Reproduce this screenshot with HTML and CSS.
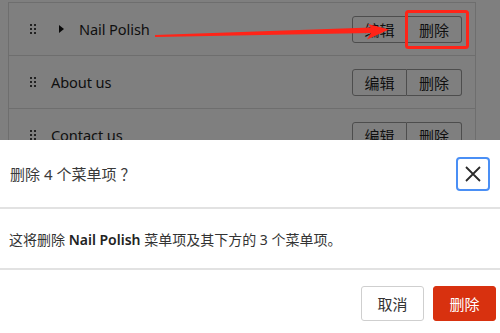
FILE: index.html
```html
<!DOCTYPE html>
<html lang="zh-CN">
<head>
<meta charset="utf-8">
<title>删除菜单项</title>
<link rel="stylesheet" href="styles.css">
</head>
<body>
  <div class="page">
    <ul class="menu-list">
      <li class="row">
        <span class="handle"><i></i><i></i><i></i><i></i><i></i><i></i></span>
        <span class="toggle"><span class="tri"></span></span>
        <span class="label">Nail Polish</span>
        <span class="actions"><button class="btn">编辑</button><button class="btn">删除</button></span>
      </li>
      <li class="row">
        <span class="handle"><i></i><i></i><i></i><i></i><i></i><i></i></span>
        <span class="label">About us</span>
        <span class="actions"><button class="btn">编辑</button><button class="btn">删除</button></span>
      </li>
      <li class="row">
        <span class="handle"><i></i><i></i><i></i><i></i><i></i><i></i></span>
        <span class="label">Contact us</span>
        <span class="actions"><button class="btn">编辑</button><button class="btn">删除</button></span>
      </li>
    </ul>
  </div>

  <div class="overlay"></div>

  <div class="modal">
    <div class="modal-header">
      <h2 class="modal-title">删除 4 个菜单项<span class="punct">？</span></h2>
      <button class="close" aria-label="关闭">
        <svg width="16" height="16" viewBox="0 0 16 16"><path d="M1 1 L15 15 M15 1 L1 15" stroke="#2b2b2b" stroke-width="1.8" fill="none"/></svg>
      </button>
    </div>
    <div class="modal-body">这将删除 <strong>Nail Polish</strong> 菜单项及其下方的 3 个菜单项。</div>
    <div class="modal-footer">
      <button class="fbtn cancel">取消</button>
      <button class="fbtn danger">删除</button>
    </div>
  </div>

  <svg class="annotation" width="500" height="333" viewBox="0 0 500 333">
    <polygon points="155,35 371,27.6 368,24 389,29.5 367,39.5 371,33 155,37" fill="#ff2418"/>
    <rect x="406.5" y="11.5" width="61" height="36" rx="2" fill="none" stroke="#ff2418" stroke-width="3"/>
  </svg>
</body>
</html>
```

FILE: styles.css
```css
* { box-sizing: border-box; }
html, body { margin: 0; padding: 0; }
body {
  width: 500px;
  height: 333px;
  overflow: hidden;
  background: #fff;
  font-family: "Noto Sans", "Noto Sans CJK SC", sans-serif;
  color: #1e1e1e;
  position: relative;
}
.page { padding-top: 2px; }
.menu-list {
  list-style: none;
  margin: 0 0 0 8px;
  padding: 0;
  width: 468px;
  border-left: 1px solid #dcdcdc;
  border-right: 1px solid #dcdcdc;
}
.row {
  display: flex;
  align-items: center;
  height: 53px;
  border-top: 1px solid #dcdcdc;
  padding: 0 13px 0 21px;
  font-size: 14.6px;
}
.handle {
  display: grid;
  grid-template-columns: 2px 2px;
  grid-auto-rows: 2px;
  column-gap: 2px;
  row-gap: 2px;
  width: 6px;
  margin-right: 15px;
}
.handle i { display: block; width: 2px; height: 2px; background: #444; }
.toggle { width: 28px; display: flex; align-items: center; padding-left: 8px; }
.tri {
  width: 0; height: 0;
  border-top: 4px solid transparent;
  border-bottom: 4px solid transparent;
  border-left: 5px solid #111;
}
.label { flex: 1; color: #1e1e1e; letter-spacing: -0.1px; }
.actions { display: flex; }
.btn {
  font-family: "Noto Sans CJK SC", sans-serif;
  font-size: 15px;
  color: #1e1e1e;
  background: #fff;
  border: 1px solid #9a9a9a;
  height: 27px;
  width: 55px;
  padding: 0;
  line-height: 25px;
}
.btn:first-child { border-radius: 3px 0 0 3px; }
.btn:last-child { border-radius: 0 3px 3px 0; border-left: none; }

.overlay {
  position: absolute;
  inset: 0;
  background: rgba(0, 0, 0, 0.5);
}
.modal {
  position: absolute;
  left: 0; right: 0; top: 140px; bottom: 0;
  background: #fff;
  display: flex;
  flex-direction: column;
}
.modal-header {
  height: 69px;
  border-bottom: 2px solid #e2e2e2;
  display: flex;
  align-items: center;
  padding: 0 10px 0 10px;
}
.modal-title {
  flex: 1;
  margin: 0;
  font-size: 15px;
  font-weight: normal;
  color: #3a3a3a;
}
.punct { padding-left: 4px; }
.close {
  width: 34px; height: 34px;
  border: 2px solid #4a8ff5;
  border-radius: 4px;
  background: #fff;
  display: flex; align-items: center; justify-content: center;
  padding: 0;
}
.modal-body {
  height: 61px;
  border-bottom: 2px solid #e2e2e2;
  padding: 21px 10px 0 9px;
  font-size: 14px;
  line-height: 20px;
  color: #333;
}
.modal-body strong { font-weight: 600; color: #222; }
.modal-footer {
  display: flex;
  justify-content: flex-end;
  gap: 9px;
  padding: 16px 4px 0 0;
}
.fbtn {
  height: 35px;
  width: 63px;
  border-radius: 3px;
  font-family: "Noto Sans CJK SC", sans-serif;
  font-size: 15px;
  padding: 0;
}
.cancel { background: #fff; border: 1px solid #cfcfcf; color: #333; }
.danger { background: #d8310f; border: 1px solid #d8310f; color: #fff; }

.annotation {
  position: absolute;
  left: 0; top: 0;
  pointer-events: none;
}
```
